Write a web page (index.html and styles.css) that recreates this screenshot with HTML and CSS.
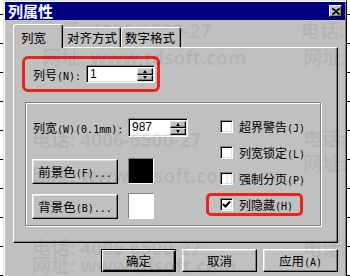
FILE: index.html
```html
<!DOCTYPE html>
<html>
<head>
<meta charset="utf-8">
<link rel="stylesheet" href="styles.css">
</head>
<body>
<div class="dialog">
  <div class="titlebar">
    <span class="title">列属性</span>
    <span class="close"><svg width="8" height="7" viewBox="0 0 8 7"><path d="M0 0.5L7 6.5M1 0.5L8 6.5M7 0.5L0 6.5M8 0.5L1 6.5" stroke="#000" stroke-width="1.1" fill="none"/></svg></span>
  </div>
  <div class="body">
    <div class="tabs">
      <div class="tab active">列宽</div>
      <div class="tab t2">对齐方式</div>
      <div class="tab t3">数字格式</div>
    </div>
    <div class="panel">
      <div class="hl-row">
        <span class="lbl lbl-n">列号<span class="m">(N):</span></span>
        <div class="spin spin-n">
          <span class="val">1</span>
          <div class="arrows"><span class="arr"><i class="up"></i></span><span class="arr"><i class="down"></i></span></div>
        </div>
      </div>
      <div class="group">
        <div class="col-left">
          <div class="field">
            <span class="lbl lbl-w">列宽<span class="m">(W)(0.1mm):</span></span>
            <div class="spin spin-w">
              <span class="val">987</span>
              <div class="arrows"><span class="arr"><i class="up"></i></span><span class="arr"><i class="down"></i></span></div>
            </div>
          </div>
          <div class="color-row first">
            <button class="btn color-btn">前景色<span class="m">(F)...</span></button>
            <span class="swatch black"></span>
          </div>
          <div class="color-row">
            <button class="btn color-btn">背景色<span class="m">(B)...</span></button>
            <span class="swatch white"></span>
          </div>
        </div>
        <div class="col-right">
          <div class="check"><span class="box"></span><span class="ctext">超界警告<span class="m">(J)</span></span></div>
          <div class="check"><span class="box"></span><span class="ctext">列宽锁定<span class="m">(L)</span></span></div>
          <div class="check"><span class="box"></span><span class="ctext">强制分页<span class="m">(P)</span></span></div>
          <div class="check hl"><span class="box"><svg width="9" height="9" viewBox="0 0 9 9"><path d="M1 4L3.5 6.5L8 1.5" stroke="#000" stroke-width="2" fill="none"/></svg></span><span class="ctext">列隐藏<span class="m">(H)</span></span></div>
        </div>
      </div>
    </div>
    <div class="actions">
      <button class="btn act default">确定</button>
      <button class="btn act">取消</button>
      <button class="btn act">应用<span class="m">(A)</span></button>
    </div>
  </div>
</div>
<div class="watermark">
  <span class="wm wm1">电话: 4006-6500-27</span>
  <span class="wm wm2">网址: www.tdsoft.com</span>
  <span class="wm wm3">电话: 4006-6500-27</span>
  <span class="wm wm4">网址: www.tdsoft.com</span>
  <span class="wm wm5">电话: 4006-6500-27</span>
  <span class="wm wm6">网址: www.tdsoft.com</span>
  <span class="wm wr1">电话:</span>
  <span class="wm wr2">网址:</span>
  <span class="wm wr3">电话:</span>
  <span class="wm wr4">网址:</span>
  <span class="wm wr5">电话:</span>
</div>
</body>
</html>
```

FILE: styles.css
```css
* { box-sizing: border-box; }
html, body { margin: 0; padding: 0; }
html { overflow: hidden; }
body {
  width: 350px;
  height: 276px;
  overflow: hidden;
  position: relative;
  background: #fff repeating-linear-gradient(to bottom, transparent 0 14px, #000 14px 15px, transparent 15px 29px);
  font-family: "Noto Sans CJK SC", "Noto Sans", sans-serif;
  font-size: 12px;
  color: #000;
}
.m {
  font-family: "DejaVu Sans Mono", "Liberation Mono", monospace;
  font-size: 10px;
}
.dialog {
  margin-left: 3px;
  width: 344px;
  height: 276px;
  background: #c0c0c0;
  border: 1px solid;
  border-bottom: none;
  border-color: #dfdfdf #000 #000 #dfdfdf;
  box-shadow: inset 1px 1px #fff, inset -1px 0 #808080;
  padding: 1px;
}
.titlebar {
  height: 18px;
  background: #000080;
  display: flex;
  align-items: center;
  justify-content: space-between;
  padding: 0 3px;
  color: #fff;
}
.title {
  font-weight: bold;
  font-size: 15px;
  line-height: 18px;
}
.close {
  width: 13px;
  height: 12px;
  background: #c0c0c0;
  border: 1px solid;
  border-color: #fff #000 #000 #fff;
  box-shadow: inset -1px -1px #808080;
  display: flex;
  align-items: center;
  justify-content: center;
}
.close svg { display: block; }
.body {
  padding: 4px 7px 0 8px;
}
.tabs {
  display: flex;
  align-items: flex-end;
  height: 24px;
  margin-bottom: -1px;
  position: relative;
  z-index: 1;
}
.tab {
  height: 20px;
  margin-bottom: 1px;
  background: #c0c0c0;
  border-left: 1px solid #fff;
  border-top: 1px solid #fff;
  border-right: 1px solid #000;
  box-shadow: inset -1px 0 #808080;
  border-radius: 3px 3px 0 0;
  font-size: 12.5px;
  line-height: 17px;
  padding-top: 1px;
  white-space: nowrap;
}
.tab.active {
  width: 50px;
  height: 24px;
  margin-bottom: 0;
  padding-left: 7px;
  padding-top: 4px;
}
.tab.t2 { width: 58px; padding-left: 4px; border-left: none; }
.tab.t3 { width: 60px; padding-left: 3px; border-left: 1px solid #fff; }
.panel {
  height: 196px;
  border: 1px solid;
  border-color: #fff #000 #000 #fff;
  box-shadow: inset -1px -1px #808080;
  padding: 8px 0 0 8px;
}
.hl-row {
  width: 138px;
  height: 36px;
  border: 3px solid #e8241f;
  border-radius: 6px;
  display: flex;
  align-items: center;
  padding-left: 8px;
}
.lbl { white-space: nowrap; }
.lbl-n { width: 53px; }
.spin {
  display: flex;
  background: #fff;
  border: 1px solid;
  border-color: #808080 #fff #fff #808080;
  box-shadow: inset 1px 1px #000, inset -1px -1px #dfdfdf;
  padding: 2px 1px 1px 2px;
}
.spin-n { width: 69px; height: 18px; }
.spin-w { width: 60px; height: 19px; }
.val {
  flex: 1;
  font-family: "Liberation Sans", Arial, sans-serif;
  font-size: 12px;
  line-height: 13px;
  padding-left: 1px;
}
.arrows {
  width: 16px;
  display: flex;
  flex-direction: column;
}
.arr {
  flex: 1;
  background: #c0c0c0;
  border: 1px solid;
  border-color: #dfdfdf #000 #000 #dfdfdf;
  box-shadow: inset -1px -1px #808080;
  display: flex;
  align-items: center;
  justify-content: center;
}
.up {
  width: 0; height: 0;
  border-left: 2.5px solid transparent;
  border-right: 2.5px solid transparent;
  border-bottom: 3px solid #000;
}
.down {
  width: 0; height: 0;
  border-left: 2.5px solid transparent;
  border-right: 2.5px solid transparent;
  border-top: 3px solid #000;
}
.group {
  margin-top: 10px;
  margin-left: 3px;
  width: 296px;
  height: 124px;
  border: 1px solid #808080;
  box-shadow: inset 1px 1px #fff, 1px 1px #fff;
  display: flex;
  padding: 12px 0 0 6px;
}
.col-left {
  width: 174px;
  display: flex;
  flex-direction: column;
}
.field {
  margin-top: 3px;
  height: 19px;
  display: flex;
  align-items: center;
  padding-left: 1px;
}
.lbl-w { width: 95px; }
.color-row {
  display: flex;
  align-items: center;
  height: 26px;
  margin-top: 9px;
}
.color-row.first { margin-top: 21px; }
.btn {
  font-family: "Noto Sans CJK SC", "Noto Sans", sans-serif;
  font-size: 12.5px;
  color: #000;
  background: #c0c0c0;
  border: 1px solid;
  border-color: #fff #000 #000 #fff;
  box-shadow: inset -1px -1px #808080, inset 1px 1px #dfdfdf;
  padding: 0;
  margin: 0;
  white-space: nowrap;
}
.color-btn {
  width: 86px;
  height: 25px;
}
.swatch {
  width: 26px;
  height: 26px;
  margin-left: 10px;
  border: 1px solid;
  border-color: #808080 #fff #fff #808080;
}
.swatch.black { background: #000; }
.swatch.white { background: #fff; }
.col-right {
  display: flex;
  flex-direction: column;
  gap: 3px;
}
.check {
  width: 97px;
  height: 23px;
  border: 3px solid transparent;
  border-radius: 5px;
  padding-left: 11px;
  display: flex;
  align-items: center;
  white-space: nowrap;
}
.check.hl { border-color: #e8241f; }
.box {
  width: 13px;
  height: 13px;
  flex: none;
  background: #fff;
  border: 1px solid;
  border-color: #808080 #fff #fff #808080;
  box-shadow: inset 1px 1px #000, inset -1px -1px #dfdfdf;
  display: flex;
  align-items: center;
  justify-content: center;
}
.box svg { display: block; }
.ctext { margin-left: 6px; }
.actions {
  margin-top: 6px;
  display: flex;
  justify-content: flex-end;
  gap: 6px;
}
.act {
  width: 75px;
  height: 23px;
}
.act.default {
  border-color: #000;
  box-shadow: inset 1px 1px #fff, inset -1px -1px #000, inset -2px -2px #808080;
}
.watermark {
  position: absolute;
  left: 0;
  top: 0;
  width: 350px;
  height: 276px;
  overflow: hidden;
  pointer-events: none;
}
.wm {
  position: absolute;
  font-family: "Noto Sans", "Noto Sans CJK SC", sans-serif;
  font-weight: bold;
  font-size: 19px;
  line-height: 20px;
  color: rgba(0, 0, 0, 0.07);
  white-space: nowrap;
}
.wm1 { left: 42px; top: 21px; }
.wm2 { left: 42px; top: 48px; }
.wm3 { left: 32px; top: 130px; }
.wm4 { left: 32px; top: 166px; }
.wm5 { left: 32px; top: 238px; }
.wm6 { left: 32px; top: 256px; }
.wr1 { left: 301px; top: 21px; }
.wr2 { left: 303px; top: 48px; }
.wr3 { left: 303px; top: 129px; }
.wr4 { left: 303px; top: 154px; }
.wr5 { left: 303px; top: 239px; }
```
